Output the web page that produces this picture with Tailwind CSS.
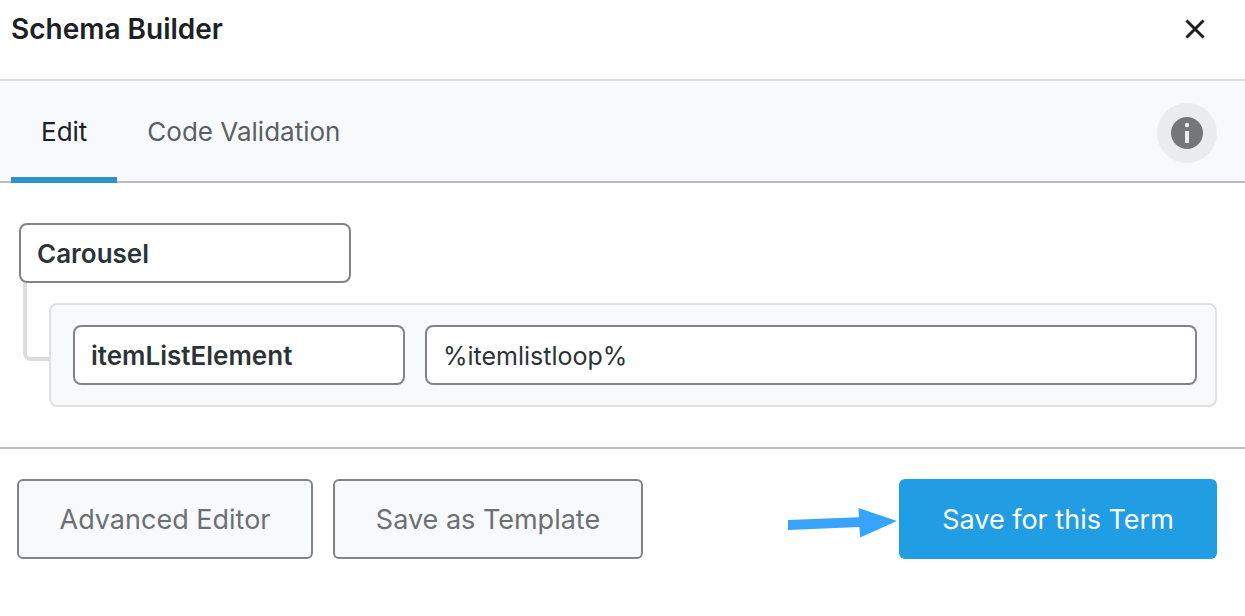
<!DOCTYPE html>
<html lang="en">
<head>
  <meta charset="UTF-8" />
  <meta name="viewport" content="width=device-width, initial-scale=1.0" />
  <title>Schema Builder</title>
  <script src="https://cdn.jsdelivr.net/npm/@tailwindcss/browser@4"></script>
</head>
<body class="min-h-screen bg-white font-['Inter',sans-serif] text-[26px] text-[#2c3338]">

  <!-- Header -->
  <header class="flex items-start justify-between h-[81px] pl-[11px] pr-[35px] pt-2 border-b-2 border-[#dcdcde]">
    <h1 class="text-[28px] leading-[42px] font-semibold text-[#1e2124]">Schema Builder</h1>
    <button type="button" aria-label="Close" class="flex items-center justify-center w-[30px] h-[42px] text-[#1e1e1e]">
      <svg class="w-5 h-5" viewBox="0 0 20 20" fill="none" stroke="currentColor" stroke-width="3">
        <path d="M1.5 1.5L18.5 18.5M18.5 1.5L1.5 18.5" />
      </svg>
    </button>
  </header>

  <!-- Tabs -->
  <nav class="flex items-start justify-between h-[102px] pl-[11px] pr-7 bg-[#f8f9fb] border-b-2 border-[#b9bcbe]">
    <div class="flex h-[102px]">
      <button type="button" class="px-[30px] pt-1 border-b-6 border-[#2794c7] text-[26px] text-[#1e2124]">Edit</button>
      <button type="button" class="px-[30px] pt-1 border-b-6 border-transparent text-[26px] text-[#5b5f63]">Code Validation</button>
    </div>
    <button type="button" aria-label="Information" class="flex items-center justify-center w-[60px] h-[60px] mt-[22px] rounded-full bg-[#ebecee]">
      <svg class="w-8 h-8" viewBox="0 0 32 32">
        <circle cx="16" cy="16" r="16" fill="#757678" />
        <circle cx="16" cy="8" r="2.2" fill="#ebecee" />
        <path d="M14 14h4v12h-4z" fill="#ebecee" />
      </svg>
    </button>
  </nav>

  <!-- Schema fields -->
  <main class="pl-[19px] pr-7 py-10 border-b-2 border-[#b9bcbe]">
    <input type="text" value="Carousel" aria-label="Schema type" class="block w-[332px] h-[60px] px-4 border-2 border-[#818386] rounded-lg bg-white text-[26px] font-semibold" />
    <div class="flex pl-1">
      <div class="w-[26px] h-[78px] shrink-0 border-l-4 border-b-4 border-[#dcdcde] rounded-bl-lg"></div>
      <div class="flex grow gap-5 mt-5 py-5 pl-[22px] pr-[18px] border-2 border-[#dfe0e2] rounded-lg bg-[#f8f9fb]">
        <input type="text" value="itemListElement" aria-label="Property name" class="w-[332px] h-[60px] shrink-0 px-4 border-2 border-[#818386] rounded-lg bg-white text-[26px] font-semibold" />
        <input type="text" value="%itemlistloop%" aria-label="Property value" class="grow min-w-0 h-[60px] px-4 pt-[2px] border-2 border-[#818386] rounded-lg bg-white text-[25px]" />
      </div>
    </div>
  </main>

  <!-- Actions -->
  <footer class="flex items-center gap-5 pl-[17px] pr-7 py-[30px]">
    <button type="button" class="w-[296px] h-20 pt-[2px] border-2 border-[#818386] rounded-md bg-[#f8f9fb] text-[27px] text-[#6c7074]">Advanced Editor</button>
    <button type="button" class="w-[310px] h-20 pt-[2px] border-2 border-[#818386] rounded-md bg-[#f8f9fb] text-[27px] text-[#6c7074]">Save as Template</button>
    <div class="flex items-center gap-[2px] ml-auto">
      <svg class="w-[109px] h-[30px] mt-2" viewBox="0 0 109 30" fill="#38a3fd">
        <path d="M0 12L71 9.300L70.500 0L109 13L72 29.500L71.500 19L0 22z" />
      </svg>
      <button type="button" class="w-[318px] h-20 pt-[2px] rounded-md bg-[#219de3] text-[27px] text-white">Save for this Term</button>
    </div>
  </footer>

</body>
</html>
